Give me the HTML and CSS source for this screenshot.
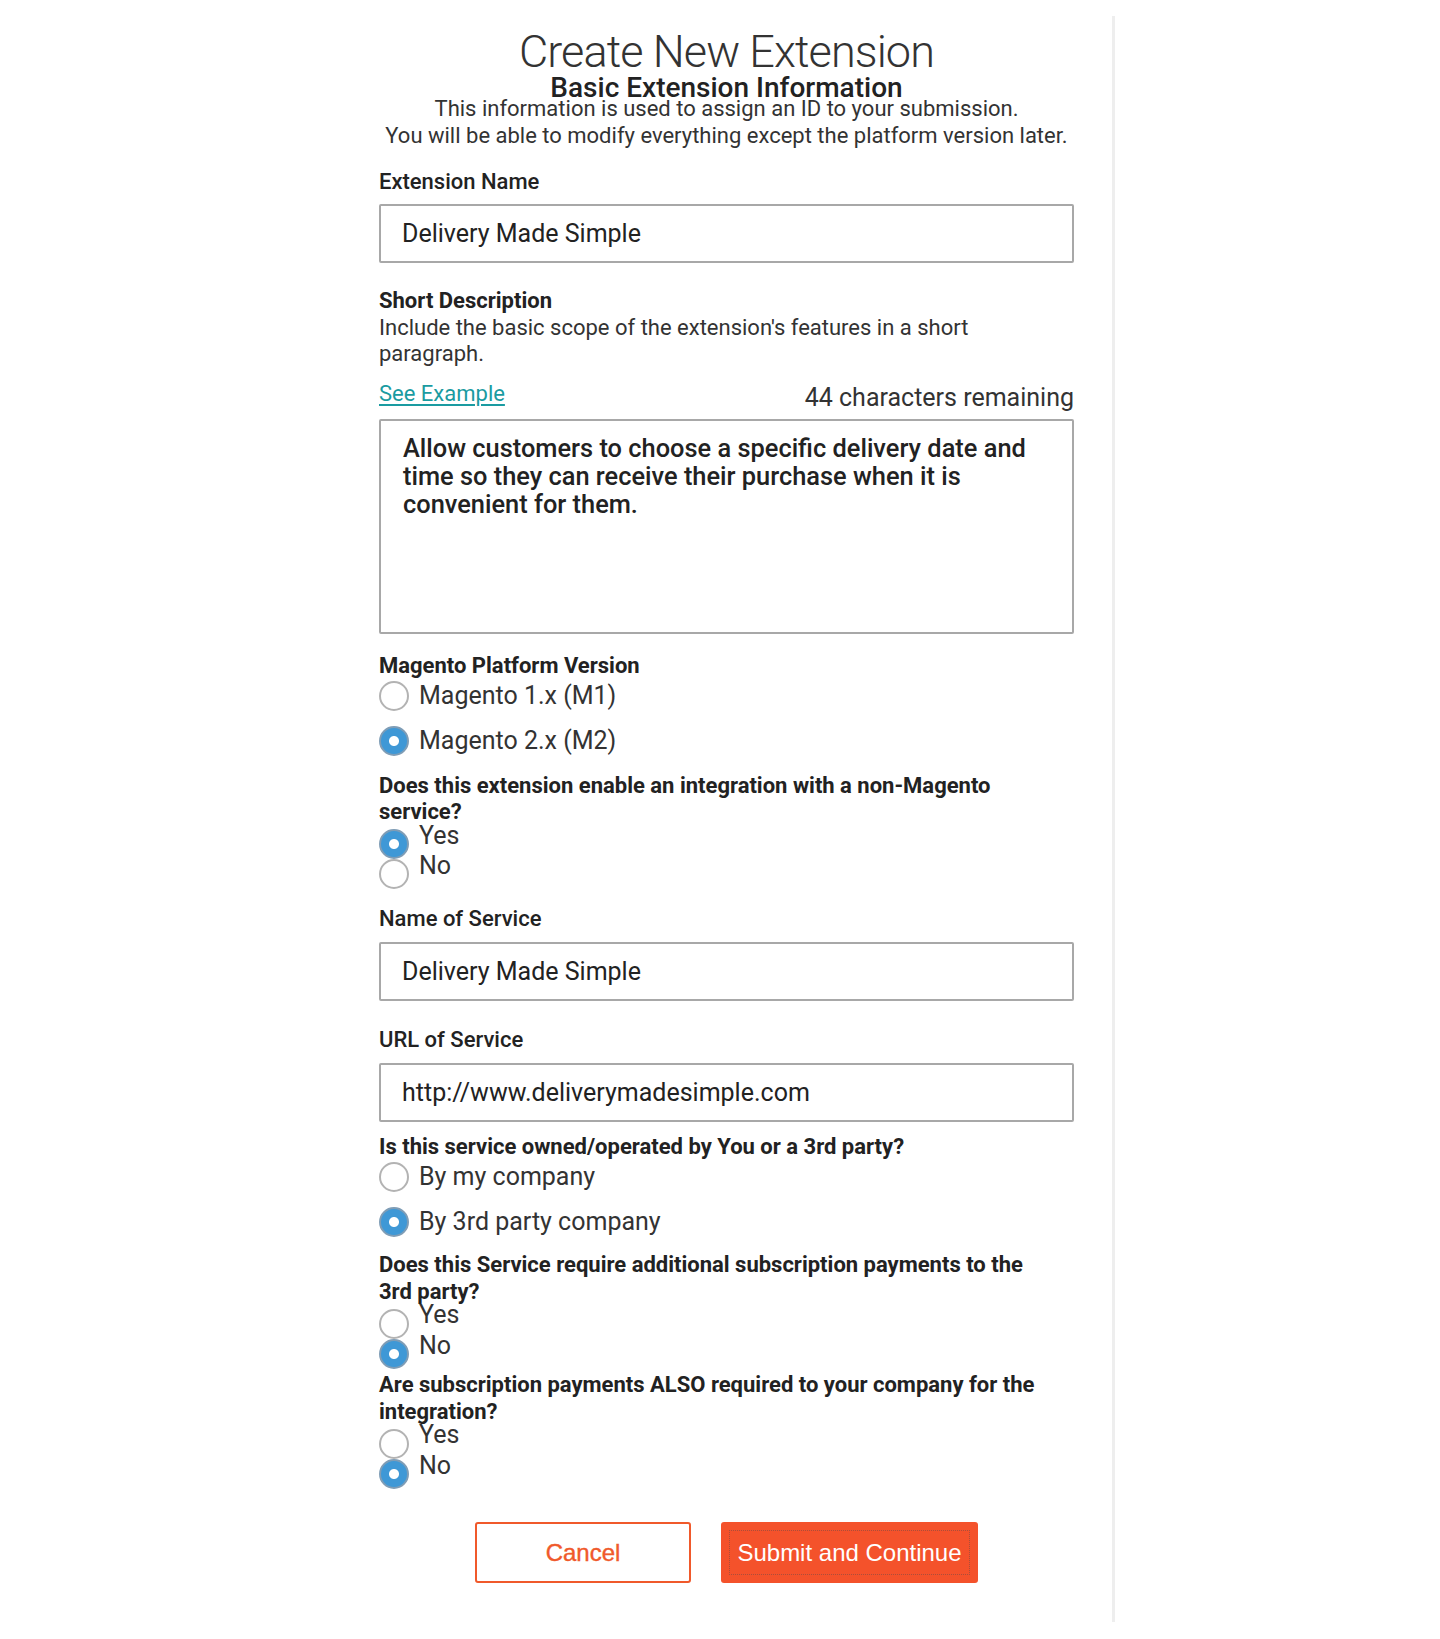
FILE: index.html
```html
<!DOCTYPE html>
<html lang="en">
<head>
<meta charset="utf-8">
<title>Create New Extension</title>
<link rel="stylesheet" href="styles.css">
</head>
<body>
<main class="page">
  <header class="intro">
    <h1 class="title">Create New Extension</h1>
    <h2 class="subtitle">Basic Extension Information</h2>
    <p class="lead"><span class="lead-line">This information is used to assign an ID to your submission.</span><span class="lead-line">You will be able to modify everything except the platform version later.</span></p>
  </header>

  <form class="form">
    <label class="label label-first" for="ext-name">Extension Name</label>
    <input class="text-input input-first" id="ext-name" type="text" value="Delivery Made Simple">

    <div class="label label-strong label-desc">Short Description</div>
    <p class="hint">Include the basic scope of the extension's features in a short paragraph.</p>
    <div class="desc-meta">
      <a class="link" href="#">See Example</a>
      <span class="counter">44 characters remaining</span>
    </div>
    <textarea class="text-area">Allow customers to choose a specific delivery date and time so they can receive their purchase when it is convenient for them.</textarea>

    <div class="label label-strong label-platform">Magento Platform Version</div>
    <div class="choices-wide">
      <label class="choice"><input class="radio" type="radio" name="platform"><span class="choice-text">Magento 1.x (M1)</span></label>
      <label class="choice"><input class="radio" type="radio" name="platform" checked><span class="choice-text">Magento 2.x (M2)</span></label>
    </div>

    <div class="label label-strong question q-integration">Does this extension enable an integration with a non-Magento service?</div>
    <div class="choices-compact">
      <label class="choice-c"><input class="radio" type="radio" name="integration" checked><span class="choice-text">Yes</span></label>
      <label class="choice-c"><input class="radio" type="radio" name="integration"><span class="choice-text">No</span></label>
    </div>

    <label class="label label-service" for="svc-name">Name of Service</label>
    <input class="text-input input-after" id="svc-name" type="text" value="Delivery Made Simple">

    <label class="label label-url" for="svc-url">URL of Service</label>
    <input class="text-input input-after" id="svc-url" type="text" value="http://www.deliverymadesimple.com">

    <div class="label label-strong question q-owner">Is this service owned/operated by You or a 3rd party?</div>
    <div class="choices-wide">
      <label class="choice"><input class="radio" type="radio" name="owner"><span class="choice-text">By my company</span></label>
      <label class="choice choice-second"><input class="radio" type="radio" name="owner" checked><span class="choice-text">By 3rd party company</span></label>
    </div>

    <div class="label label-strong question q-third">Does this Service require additional subscription payments to the 3rd party?</div>
    <div class="choices-compact">
      <label class="choice-c"><input class="radio" type="radio" name="third"><span class="choice-text">Yes</span></label>
      <label class="choice-c"><input class="radio" type="radio" name="third" checked><span class="choice-text">No</span></label>
    </div>

    <div class="label label-strong question q-also">Are subscription payments ALSO required to your company for the integration?</div>
    <div class="choices-compact">
      <label class="choice-c"><input class="radio" type="radio" name="also"><span class="choice-text">Yes</span></label>
      <label class="choice-c"><input class="radio" type="radio" name="also" checked><span class="choice-text">No</span></label>
    </div>

    <div class="actions">
      <button class="btn btn-cancel" type="button">Cancel</button>
      <button class="btn btn-submit" type="button">Submit and Continue</button>
    </div>
  </form>
</main>
</body>
</html>
```
FILE: styles.css
```css
* {
  box-sizing: border-box;
}

body {
  margin: 0;
  background: #ffffff;
  color: #333333;
  font-family: Roboto, "Liberation Sans", Arial, sans-serif;
}

.page {
  width: 736px;
  margin: 16px 0 17px 379px;
  padding: 15px 38px 39px 0;
  border-right: 3px solid #eeeeee;
}

/* header */
.intro {
  text-align: center;
}

.title {
  margin: 0;
  font-size: 45px;
  font-weight: 300;
  line-height: 41px;
  letter-spacing: -0.9px;
  color: #333333;
}

.subtitle {
  margin: 5.5px 0 0;
  font-size: 28px;
  font-weight: 500;
  line-height: 20px;
  color: #222222;
}

.lead {
  margin: -2.5px 0 0;
  font-size: 22px;
  line-height: 27px;
  color: #333333;
}

.lead-line {
  display: block;
  white-space: nowrap;
}

/* form */
.form {
  display: flex;
  flex-direction: column;
}

.label {
  display: block;
  font-size: 22px;
  font-weight: 500;
  line-height: 26px;
  color: #222222;
}

.label-strong {
  font-weight: 700;
}

.question {
  max-width: 672px;
  line-height: 26.5px;
}

.label-first { margin-top: 19.5px; }
.label-desc { margin-top: 25px; }
.label-platform { margin-top: 18.5px; }
.q-integration { margin-top: 17.2px; }
.label-service { margin-top: 19.8px; }
.label-url { margin-top: 26px; }
.q-owner { margin-top: 11.2px; }
.q-third { margin-top: 15.7px; }
.q-also { margin-top: 6px; }

.text-input {
  display: block;
  width: 100%;
  height: 59px;
  padding: 0 0 0 21px;
  border: 2px solid #a8a8a8;
  border-radius: 2px;
  background: #ffffff;
  color: #222222;
  font-family: Roboto, "Liberation Sans", Arial, sans-serif;
  font-size: 25px;
  font-weight: 400;
  outline: none;
}

.input-first { margin-top: 9px; }
.input-after { margin-top: 10px; }

.hint {
  margin: 1px 0 0;
  font-size: 22px;
  line-height: 26px;
  color: #333333;
}

.desc-meta {
  display: flex;
  justify-content: space-between;
  align-items: flex-start;
  margin-top: 14px;
}

.link {
  font-size: 22px;
  line-height: 26px;
  color: #1a9ba1;
  text-decoration: underline;
  text-underline-offset: 3px;
}

.counter {
  margin-top: 2px;
  font-size: 25px;
  line-height: 30px;
  color: #333333;
}

.text-area {
  display: block;
  width: 100%;
  height: 215px;
  margin-top: 6.5px;
  padding: 12.5px 22px;
  border: 2px solid #a8a8a8;
  border-radius: 2px;
  background: #ffffff;
  color: #222222;
  font-family: Roboto, "Liberation Sans", Arial, sans-serif;
  font-size: 25.4px;
  font-weight: 500;
  line-height: 28px;
  resize: none;
  outline: none;
}

/* radios */
.radio {
  appearance: none;
  -webkit-appearance: none;
  flex: none;
  width: 30px;
  height: 30px;
  margin: 0 10px 0 0;
  border: 2px solid #b3b3b3;
  border-radius: 50%;
  background: #ffffff;
}

.radio:checked {
  border-color: #7f9db6;
  background: radial-gradient(circle, #ffffff 0 4.5px, #3f98d6 5.5px);
}

.choice-text {
  font-size: 25px;
  color: #333333;
}

.choices-wide {
  display: flex;
  flex-direction: column;
}

.choice {
  display: flex;
  align-items: center;
  height: 30px;
  margin-top: 15px;
}

.choice:first-child {
  margin-top: 2px;
}

.choice .choice-text {
  line-height: 30px;
}

.choice-second {
  margin-top: 14.5px;
}

.choices-compact {
  display: flex;
  flex-direction: column;
}

.choice-c {
  display: flex;
  align-items: flex-start;
  height: 30.5px;
}

.choice-c .radio {
  margin-top: 3.25px;
}

.choice-c .choice-text {
  line-height: 20px;
}

/* buttons */
.actions {
  display: flex;
  justify-content: center;
  gap: 30px;
  margin-top: 36px;
}

.btn {
  height: 61px;
  border-radius: 3px;
  font-family: "Liberation Sans", Arial, sans-serif;
  font-size: 24px;
  cursor: pointer;
}

.btn-cancel {
  width: 216px;
  border: 2px solid #f0592b;
  background: #ffffff;
  color: #f0592b;
  -webkit-text-stroke: 0.4px #f0592b;
}

.btn-submit {
  width: 257px;
  border: 0;
  background: #f4522b;
  color: #ffffff;
  outline: 1px dotted rgba(20, 70, 90, 0.32);
  outline-offset: -9px;
}
```
